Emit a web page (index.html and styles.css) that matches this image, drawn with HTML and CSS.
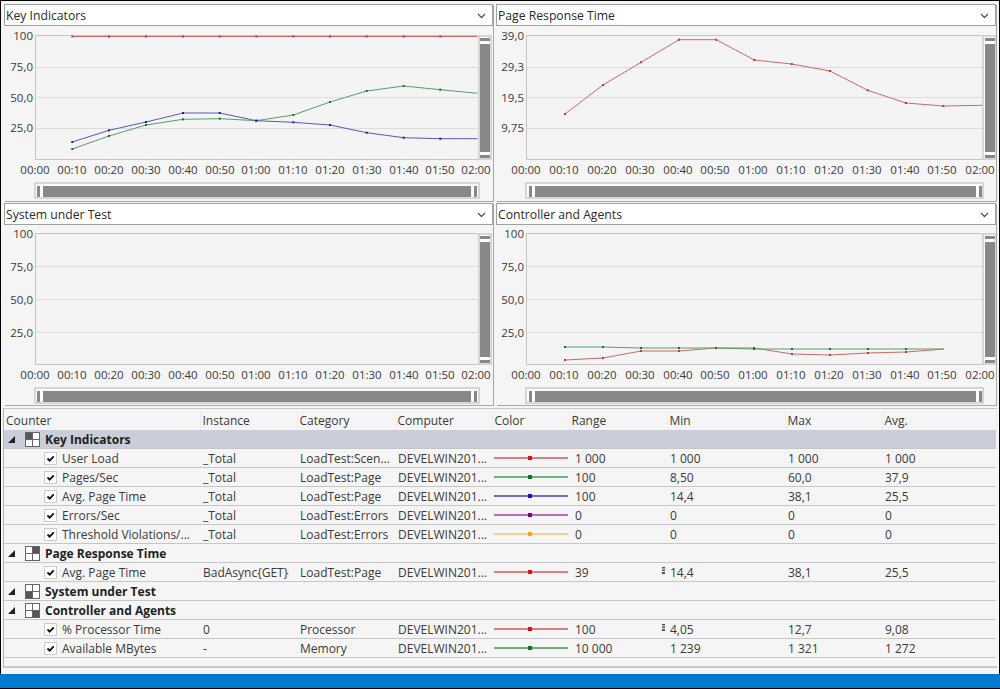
FILE: index.html
```html
<!DOCTYPE html>
<html lang="en">
<head>
    <meta charset="UTF-8">
    <meta name="viewport" content="width=device-width, initial-scale=1.0">
    <title>Load Test Graphs</title>
    <link rel="stylesheet" href="styles.css">
</head>
<body>
<div class="app">

    <!-- shared series markers -->
    <svg class="defs" aria-hidden="true">
        <defs>
            <marker id="dotRed" markerUnits="userSpaceOnUse" markerWidth="3" markerHeight="3" refX="1.5" refY="1.5"><rect x="0.5" y="0.5" width="2" height="2" fill="#c8303c"/></marker>
            <marker id="dotGreen" markerUnits="userSpaceOnUse" markerWidth="3" markerHeight="3" refX="1.5" refY="1.5"><rect x="0.5" y="0.5" width="2" height="2" fill="#0a7a20"/></marker>
            <marker id="dotBlue" markerUnits="userSpaceOnUse" markerWidth="3" markerHeight="3" refX="1.5" refY="1.5"><rect x="0.5" y="0.5" width="2" height="2" fill="#1515c0"/></marker>
        </defs>
    </svg>

    <div class="charts">

        <!-- Key Indicators -->
        <section class="panel">
            <div class="combo"><span>Key Indicators</span><svg class="chev" viewBox="0 0 9 6"><path d="M1 1l3.5 3.5L8 1"/></svg></div>
            <svg class="chart" viewBox="4 26 489 174" width="489" height="174">
                <path class="axis" d="M35.5 35V160M35 159.5H478M35 35.5H478"/>
                <rect class="plot" x="36" y="36" width="442" height="123"/>
                <path class="gridline" d="M36 67.5H478M36 97.5H478M36 128.5H478"/>
                <path class="zero" d="M72 158.5v2M109 158.5v2M146 158.5v2M183 158.5v2M220 158.5v2M256 158.5v2M293 158.5v2M330 158.5v2M367 158.5v2M404 158.5v2M440 158.5v2M477 158.5v2"/>
                <g class="yl"><text x="33" y="40">100</text><text x="33" y="71">75,0</text><text x="33" y="102">50,0</text><text x="33" y="132">25,0</text></g>
                <g class="xl">
                    <text x="35" y="174">00:00</text><text x="72" y="174">00:10</text><text x="109" y="174">00:20</text><text x="146" y="174">00:30</text><text x="183" y="174">00:40</text><text x="220" y="174">00:50</text><text x="256" y="174">01:00</text><text x="293" y="174">01:10</text><text x="330" y="174">01:20</text><text x="367" y="174">01:30</text><text x="404" y="174">01:40</text><text x="440" y="174">01:50</text><text x="476" y="174">02:00</text>
                </g>
                <polyline class="line red" points="72.3,36.5 109,36.5 146,36.5 183,36.5 219.7,36.5 256.3,36.5 293.3,36.5 330,36.5 366.7,36.5 403.7,36.5 440.3,36.5 477.3,36.5"/>
                <polyline class="line green" points="72.3,149 109,136 146,125 183,119.3 219.7,118.7 256.3,120.7 293.3,115 330,102 366.7,91 403.7,86 440.3,89.7 477.3,93.3"/>
                <polyline class="line blue" points="72.3,142 109,130.3 146,122 183,113 219.7,113 256.3,120.7 293.3,122.3 330,125 366.7,132.7 403.7,137.7 440.3,138.7 477.3,138.7"/>
                <g class="sb">
                    <rect class="sb-edge" x="479" y="36" width="12" height="123"/>
                    <rect x="480" y="38" width="10" height="3"/><rect x="480" y="44" width="10" height="108"/><rect x="480" y="155" width="10" height="3"/>
                    <rect class="sb-edge" x="35" y="183" width="444" height="15"/>
                    <rect x="37" y="186" width="3" height="11"/><rect x="43" y="186" width="428" height="11"/><rect x="474" y="186" width="3" height="11"/>
                </g>
            </svg>
        </section>

        <!-- Page Response Time -->
        <section class="panel">
            <div class="combo"><span>Page Response Time</span><svg class="chev" viewBox="0 0 9 6"><path d="M1 1l3.5 3.5L8 1"/></svg></div>
            <svg class="chart" viewBox="496 26 500 174" width="500" height="174">
                <path class="axis" d="M526.5 35V160M526 159.5H982M526 35.5H982"/>
                <rect class="plot" x="527" y="36" width="456" height="123"/>
                <path class="gridline" d="M527 67.5H983M527 97.5H983M527 128.5H983"/>
                <g class="yl"><text x="524" y="40">39,0</text><text x="524" y="71">29,3</text><text x="524" y="102">19,5</text><text x="524" y="132">9,75</text></g>
                <g class="xl">
                    <text x="526" y="174">00:00</text><text x="564" y="174">00:10</text><text x="602" y="174">00:20</text><text x="640" y="174">00:30</text><text x="678" y="174">00:40</text><text x="715" y="174">00:50</text><text x="753" y="174">01:00</text><text x="791" y="174">01:10</text><text x="829" y="174">01:20</text><text x="867" y="174">01:30</text><text x="905" y="174">01:40</text><text x="942" y="174">01:50</text><text x="980" y="174">02:00</text>
                </g>
                <polyline class="line red" points="565,114 603,85 641,62.3 679,39.7 716.3,39.7 754.3,60 791.7,64 830,71 867.7,90.3 906,103 943.3,106 982,105.3"/>
                <g class="sb">
                    <rect class="sb-edge" x="983" y="36" width="13" height="123"/>
                    <rect x="985" y="38" width="10" height="3"/><rect x="985" y="44" width="10" height="108"/><rect x="985" y="155" width="10" height="3"/>
                    <rect class="sb-edge" x="526" y="183" width="457" height="15"/>
                    <rect x="529" y="186" width="3" height="11"/><rect x="535" y="186" width="441" height="11"/><rect x="979" y="186" width="3" height="11"/>
                </g>
            </svg>
        </section>

        <!-- System under Test -->
        <section class="panel">
            <div class="combo"><span>System under Test</span><svg class="chev" viewBox="0 0 9 6"><path d="M1 1l3.5 3.5L8 1"/></svg></div>
            <svg class="chart" viewBox="4 225 489 180" width="489" height="180">
                <path class="axis" d="M35.5 233V365M35 364.5H478M35 233.5H478"/>
                <rect class="plot" x="36" y="234" width="442" height="130"/>
                <path class="gridline" d="M36 266.5H478M36 299.5H478M36 332.5H478"/>
                <g class="yl"><text x="33" y="238">100</text><text x="33" y="271">75,0</text><text x="33" y="304">50,0</text><text x="33" y="337">25,0</text></g>
                <g class="xl">
                    <text x="35" y="379">00:00</text><text x="72" y="379">00:10</text><text x="109" y="379">00:20</text><text x="146" y="379">00:30</text><text x="183" y="379">00:40</text><text x="220" y="379">00:50</text><text x="256" y="379">01:00</text><text x="293" y="379">01:10</text><text x="330" y="379">01:20</text><text x="367" y="379">01:30</text><text x="404" y="379">01:40</text><text x="440" y="379">01:50</text><text x="476" y="379">02:00</text>
                </g>
                <g class="sb">
                    <rect class="sb-edge" x="479" y="234" width="12" height="130"/>
                    <rect x="480" y="236" width="10" height="3"/><rect x="480" y="242" width="10" height="115"/><rect x="480" y="360" width="10" height="3"/>
                    <rect class="sb-edge" x="35" y="388" width="444" height="15"/>
                    <rect x="37" y="391" width="3" height="11"/><rect x="43" y="391" width="428" height="11"/><rect x="474" y="391" width="3" height="11"/>
                </g>
            </svg>
        </section>

        <!-- Controller and Agents -->
        <section class="panel">
            <div class="combo"><span>Controller and Agents</span><svg class="chev" viewBox="0 0 9 6"><path d="M1 1l3.5 3.5L8 1"/></svg></div>
            <svg class="chart" viewBox="496 225 500 180" width="500" height="180">
                <path class="axis" d="M526.5 233V365M526 364.5H982M526 233.5H982"/>
                <rect class="plot" x="527" y="234" width="456" height="130"/>
                <path class="gridline" d="M527 266.5H983M527 299.5H983M527 332.5H983"/>
                <g class="yl"><text x="524" y="238">100</text><text x="524" y="271">75,0</text><text x="524" y="304">50,0</text><text x="524" y="337">25,0</text></g>
                <g class="xl">
                    <text x="526" y="379">00:00</text><text x="564" y="379">00:10</text><text x="602" y="379">00:20</text><text x="640" y="379">00:30</text><text x="678" y="379">00:40</text><text x="715" y="379">00:50</text><text x="753" y="379">01:00</text><text x="791" y="379">01:10</text><text x="829" y="379">01:20</text><text x="867" y="379">01:30</text><text x="905" y="379">01:40</text><text x="942" y="379">01:50</text><text x="980" y="379">02:00</text>
                </g>
                <polyline class="line red" points="565,360 603,358 641,351 679,351 716,348 754,348 792,354 830,355 868,353 906,352 944,349"/>
                <polyline class="line green" points="565,347 603,347 641,348 679,348 716,348 754,349 792,349 830,349 868,349 906,349 944,349"/>
                <g class="sb">
                    <rect class="sb-edge" x="983" y="234" width="13" height="130"/>
                    <rect x="985" y="236" width="10" height="3"/><rect x="985" y="242" width="10" height="115"/><rect x="985" y="360" width="10" height="3"/>
                    <rect class="sb-edge" x="526" y="388" width="457" height="15"/>
                    <rect x="529" y="391" width="3" height="11"/><rect x="535" y="391" width="441" height="11"/><rect x="979" y="391" width="3" height="11"/>
                </g>
            </svg>
        </section>
    </div>

    <!-- Counter grid -->
    <div class="counters">
        <table>
            <colgroup>
                <col class="c-counter"><col class="c-instance"><col class="c-category"><col class="c-computer"><col class="c-color"><col class="c-range"><col class="c-min"><col class="c-max"><col class="c-avg">
            </colgroup>
            <thead>
                <tr><th>Counter</th><th>Instance</th><th>Category</th><th>Computer</th><th>Color</th><th>Range</th><th>Min</th><th>Max</th><th>Avg.</th></tr>
            </thead>
            <tbody>
                <tr class="group first"><td colspan="9"><div class="gcell"><i class="tri"></i><svg class="tile" viewBox="0 0 15 15"><rect x=".5" y=".5" width="14" height="14" class="tile-bg"/><rect x="1" y="1" width="6" height="6" class="tile-on"/><path d="M7.5 1v13M1 7.5h13"/></svg><b>Key Indicators</b></div></td></tr>
                <tr><td><div class="ccell"><svg class="check" viewBox="0 0 13 13"><rect x=".5" y=".5" width="12" height="12"/><path d="M3.5 6.5l2.2 2.2 4-4.4"/></svg>User Load</div></td><td>_Total</td><td>LoadTest:Scen...</td><td>DEVELWIN201...</td><td class="swatch"><span class="sw red"><i></i></span></td><td class="rng">1 000</td><td>1 000</td><td>1 000</td><td>1 000</td></tr>
                <tr><td><div class="ccell"><svg class="check" viewBox="0 0 13 13"><rect x=".5" y=".5" width="12" height="12"/><path d="M3.5 6.5l2.2 2.2 4-4.4"/></svg>Pages/Sec</div></td><td>_Total</td><td>LoadTest:Page</td><td>DEVELWIN201...</td><td class="swatch"><span class="sw green"><i></i></span></td><td class="rng">100</td><td>8,50</td><td>60,0</td><td>37,9</td></tr>
                <tr><td><div class="ccell"><svg class="check" viewBox="0 0 13 13"><rect x=".5" y=".5" width="12" height="12"/><path d="M3.5 6.5l2.2 2.2 4-4.4"/></svg>Avg. Page Time</div></td><td>_Total</td><td>LoadTest:Page</td><td>DEVELWIN201...</td><td class="swatch"><span class="sw blue"><i></i></span></td><td class="rng">100</td><td>14,4</td><td>38,1</td><td>25,5</td></tr>
                <tr><td><div class="ccell"><svg class="check" viewBox="0 0 13 13"><rect x=".5" y=".5" width="12" height="12"/><path d="M3.5 6.5l2.2 2.2 4-4.4"/></svg>Errors/Sec</div></td><td>_Total</td><td>LoadTest:Errors</td><td>DEVELWIN201...</td><td class="swatch"><span class="sw purple"><i></i></span></td><td class="rng">0</td><td>0</td><td>0</td><td>0</td></tr>
                <tr><td><div class="ccell"><svg class="check" viewBox="0 0 13 13"><rect x=".5" y=".5" width="12" height="12"/><path d="M3.5 6.5l2.2 2.2 4-4.4"/></svg>Threshold Violations/...</div></td><td>_Total</td><td>LoadTest:Errors</td><td>DEVELWIN201...</td><td class="swatch"><span class="sw orange"><i></i></span></td><td class="rng">0</td><td>0</td><td>0</td><td>0</td></tr>
                <tr class="group"><td colspan="9"><div class="gcell"><i class="tri"></i><svg class="tile" viewBox="0 0 15 15"><rect x=".5" y=".5" width="14" height="14" class="tile-bg"/><rect x="8" y="1" width="6" height="6" class="tile-on"/><path d="M7.5 1v13M1 7.5h13"/></svg><b>Page Response Time</b></div></td></tr>
                <tr><td><div class="ccell"><svg class="check" viewBox="0 0 13 13"><rect x=".5" y=".5" width="12" height="12"/><path d="M3.5 6.5l2.2 2.2 4-4.4"/></svg>Avg. Page Time</div></td><td>BadAsync{GET}</td><td>LoadTest:Page</td><td>DEVELWIN201...</td><td class="swatch"><span class="sw red"><i></i></span></td><td class="rng"><div class="rcell">39<svg class="note" viewBox="0 0 3 7"><path d="M0 0h3v1.5H0zM0 2.5h3v1.5H0zM0 5h3v2H0z"/></svg></div></td><td>14,4</td><td>38,1</td><td>25,5</td></tr>
                <tr class="group"><td colspan="9"><div class="gcell"><i class="tri"></i><svg class="tile" viewBox="0 0 15 15"><rect x=".5" y=".5" width="14" height="14" class="tile-bg"/><rect x="1" y="8" width="6" height="6" class="tile-on"/><path d="M7.5 1v13M1 7.5h13"/></svg><b>System under Test</b></div></td></tr>
                <tr class="group"><td colspan="9"><div class="gcell"><i class="tri"></i><svg class="tile" viewBox="0 0 15 15"><rect x=".5" y=".5" width="14" height="14" class="tile-bg"/><rect x="8" y="8" width="6" height="6" class="tile-on"/><path d="M7.5 1v13M1 7.5h13"/></svg><b>Controller and Agents</b></div></td></tr>
                <tr><td><div class="ccell"><svg class="check" viewBox="0 0 13 13"><rect x=".5" y=".5" width="12" height="12"/><path d="M3.5 6.5l2.2 2.2 4-4.4"/></svg>% Processor Time</div></td><td>0</td><td>Processor</td><td>DEVELWIN201...</td><td class="swatch"><span class="sw red"><i></i></span></td><td class="rng"><div class="rcell">100<svg class="note" viewBox="0 0 3 7"><path d="M0 0h3v1.5H0zM0 2.5h3v1.5H0zM0 5h3v2H0z"/></svg></div></td><td>4,05</td><td>12,7</td><td>9,08</td></tr>
                <tr><td><div class="ccell"><svg class="check" viewBox="0 0 13 13"><rect x=".5" y=".5" width="12" height="12"/><path d="M3.5 6.5l2.2 2.2 4-4.4"/></svg>Available MBytes</div></td><td>-</td><td>Memory</td><td>DEVELWIN201...</td><td class="swatch"><span class="sw green"><i></i></span></td><td class="rng">10 000</td><td>1 239</td><td>1 321</td><td>1 272</td></tr>
            </tbody>
        </table>
    </div>

    <div class="statusbar"></div>
</div>
</body>
</html>
```

FILE: styles.css
```css
html, body {
    margin: 0;
    height: 689px;
    overflow: hidden;
}
body {
    background: #000;
    font-family: "Open Sans", "Noto Sans", sans-serif;
    font-size: 12px;
    color: #3a3a3a;
}
.app {
    margin: 1px 1px 1px 1px;
    height: 687px;
    background: #f5f5f5;
    display: flex;
    flex-direction: column;
}
.defs {
    width: 0;
    height: 0;
    display: block;
}

/* charts */
.charts {
    display: grid;
    grid-template-columns: 489px 500px;
    grid-template-rows: 197px 202px;
    column-gap: 3px;
    row-gap: 2px;
    padding: 3px 0 0 3px;
}
.panel {
    display: flex;
    flex-direction: column;
    box-shadow: 1px 1px 0 #a8a8a8;
}
.combo {
    height: 22px;
    box-sizing: border-box;
    flex: none;
    background: #fff;
    border: 1px solid #a0a0a0;
    display: flex;
    align-items: center;
    justify-content: space-between;
    padding: 1px 6px 0 1px;
    font-size: 12.2px;
    color: #2a2a2a;
}
.chev {
    width: 9px;
    height: 6px;
}
.chev path {
    fill: none;
    stroke: #555;
    stroke-width: 1.3;
}
.chart {
    display: block;
    flex: none;
}
.chart text {
    font-family: "Open Sans", "Noto Sans", sans-serif;
    font-size: 11.5px;
    fill: #3a3a3a;
}
.yl text {
    text-anchor: end;
}
.xl text {
    text-anchor: middle;
}
.plot {
    fill: #f4f4f4;
}
.axis {
    stroke: #c4c4c4;
    fill: none;
}
.gridline {
    stroke: #dcdcdc;
    fill: none;
}
.zero {
    stroke: #f4c98a;
    fill: none;
}
.line {
    fill: none;
    stroke-width: 1;
}
.line.red {
    stroke: #c96a6a;
    marker-start: url(#dotRed);
    marker-mid: url(#dotRed);
}
.line.green {
    stroke: #569e68;
    marker-start: url(#dotGreen);
    marker-mid: url(#dotGreen);
}
.line.blue {
    stroke: #5858b4;
    marker-start: url(#dotBlue);
    marker-mid: url(#dotBlue);
}
.sb rect {
    fill: #888;
}
.sb .sb-edge {
    fill: #fdfdfd;
    stroke: #b4b4b4;
}

/* counter grid */
.counters {
    flex: none;
    height: 260px;
    margin: 3px 2px 0 2px;
    padding-top: 2px;
    border-top: 1px solid #c8c8c8;
    border-left: 1px solid #b4b4b4;
    border-bottom: 2px solid #c8c8c8;
    box-sizing: border-box;
}
table {
    border-collapse: collapse;
    table-layout: fixed;
    width: 992px;
}
.c-counter { width: 196px; }
.c-instance { width: 97px; }
.c-category { width: 98px; }
.c-computer { width: 97px; }
.c-color { width: 77px; }
.c-range { width: 98px; }
.c-min { width: 118px; }
.c-max { width: 97px; }
.c-avg { width: 114px; }
th {
    height: 19px;
    padding: 0 0 0 2px;
    font-weight: normal;
    text-align: left;
    font-size: 12px;
    color: #3a3a3a;
    border-right: 1px solid #ececec;
    white-space: nowrap;
    overflow: hidden;
}
td {
    height: 18px;
    padding: 0 0 0 3px;
    border-bottom: 1px solid #c6c6c6;
    white-space: nowrap;
    overflow: hidden;
    font-size: 12px;
    color: #3a3a3a;
}
.group td {
    height: 18px;
    padding: 0;
}
.group.first td {
    background: #cbced9;
}
.gcell {
    display: flex;
    align-items: center;
    padding-left: 4px;
}
.gcell b {
    font-size: 12px;
    font-weight: 700;
    color: #222;
    margin-left: 5px;
}
.tri {
    width: 0;
    height: 0;
    border-style: solid;
    border-width: 0 0 7px 7px;
    border-color: transparent transparent #222 transparent;
    margin-right: 10px;
}
.tile {
    width: 15px;
    height: 15px;
    flex: none;
}
.tile path {
    stroke: #666;
    fill: none;
}
.tile-bg {
    fill: #fff;
    stroke: #666;
}
.tile-on {
    fill: #555;
}
.ccell {
    display: flex;
    align-items: center;
    padding-left: 37px;
    gap: 5px;
}
.check {
    width: 13px;
    height: 13px;
    flex: none;
}
.check rect {
    fill: #fff;
    stroke: #ccc;
}
.check path {
    fill: none;
    stroke: #111;
    stroke-width: 1.8;
}
.swatch {
    padding-left: 2px;
}
.sw {
    display: block;
    position: relative;
    width: 74px;
    height: 2px;
}
.sw i {
    position: absolute;
    left: 34px;
    top: -1px;
    width: 4px;
    height: 4px;
}
.sw.red { background: #d98080; }
.sw.red i { background: #e01010; }
.sw.green { background: #6fb07c; }
.sw.green i { background: #0a7a20; }
.sw.blue { background: #7272c0; }
.sw.blue i { background: #1010d8; }
.sw.purple { background: #b570b8; }
.sw.purple i { background: #800080; }
.sw.orange { background: #f5d090; }
.sw.orange i { background: #ffa500; }
.rng {
    padding-left: 6px;
}
.rcell {
    display: flex;
    justify-content: space-between;
    align-items: center;
    padding-right: 2px;
}
.note {
    width: 3px;
    height: 7px;
    margin-top: -3px;
}
.note path {
    fill: #555;
}

.statusbar {
    flex: none;
    margin-top: 6px;
    height: 14px;
    margin-left: -1px;
    margin-right: -1px;
    background: #007acc;
}
```
